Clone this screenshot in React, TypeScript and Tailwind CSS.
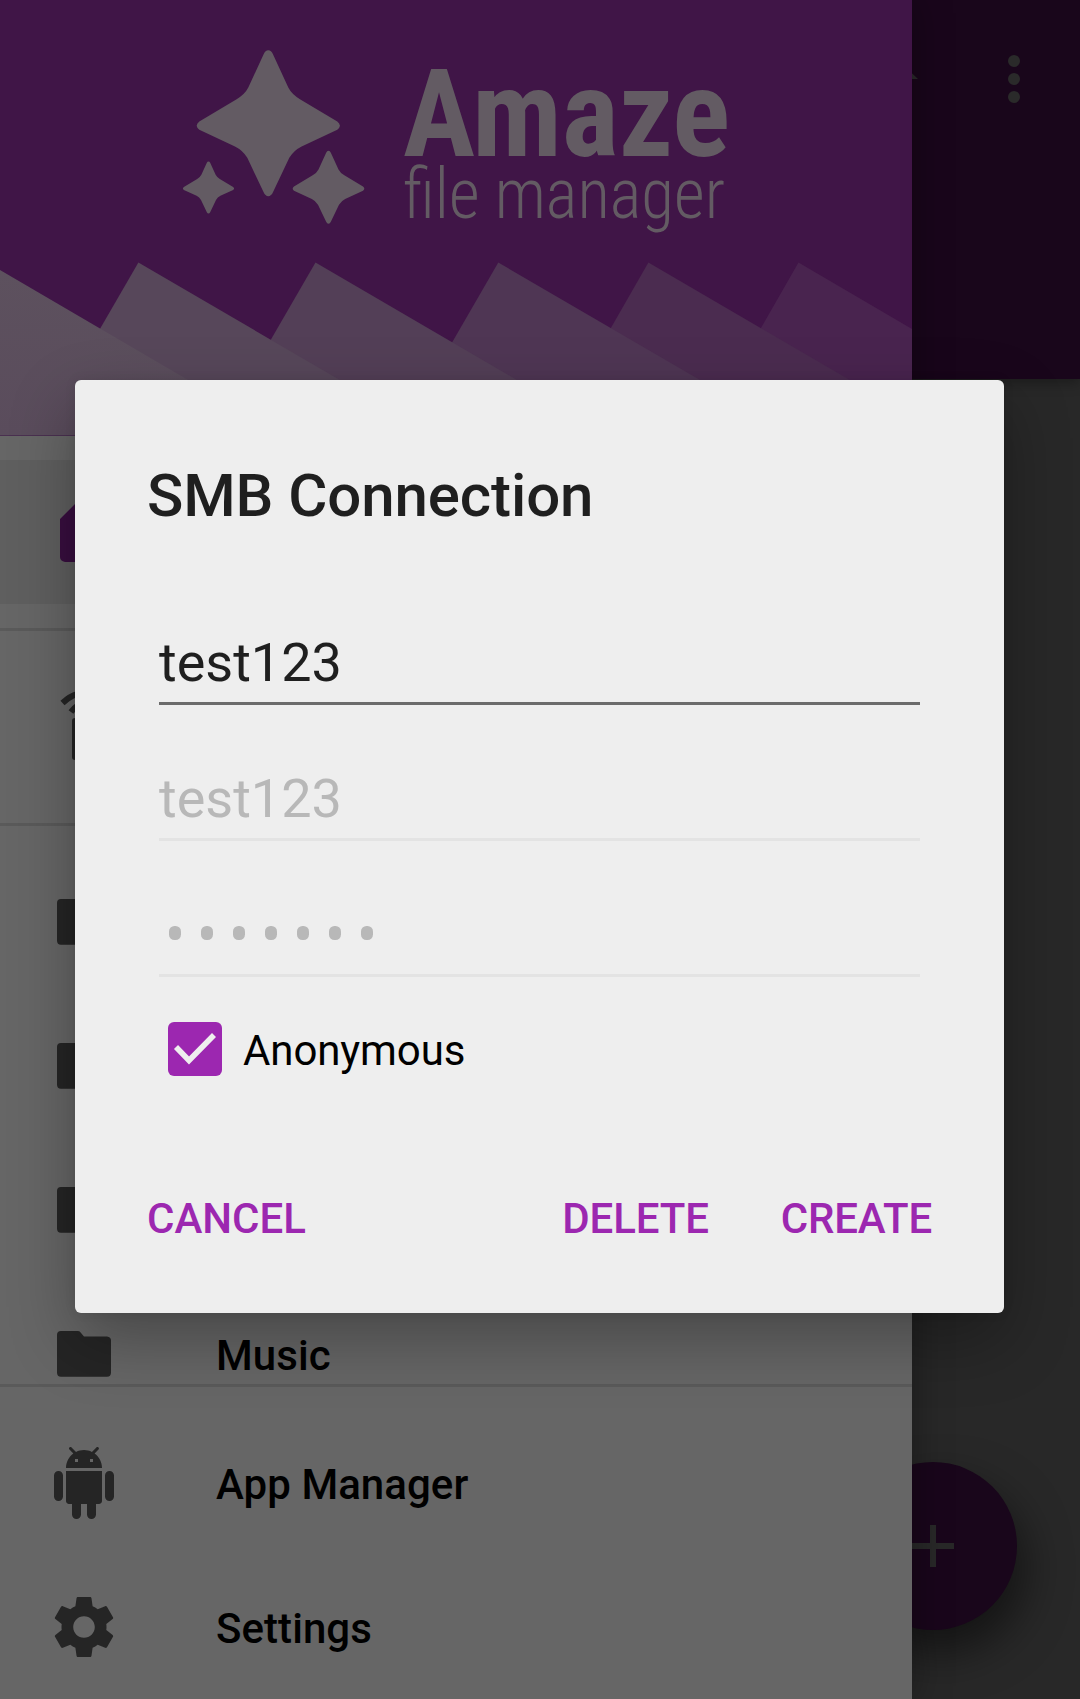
import type { ReactNode } from "react";

const STAR =
  "M0 -219 Q9 -219 14 -207 L60 -107 Q70 -87 95 -72 L207 -5 Q214 0 215 8 Q214 15 207 20 L100 70 Q76 82 63 104 L14 207 Q9 218 0 219 Q-9 218 -14 207 L-63 104 Q-76 82 -100 70 L-207 20 Q-214 15 -215 8 Q-214 0 -207 -5 L-95 -72 Q-70 -87 -60 -107 L-14 -207 Q-9 -219 0 -219 Z";

const ANDROID =
  "M6 18c0 .55.45 1 1 1h1v3.5c0 .83.67 1.5 1.5 1.5s1.5-.67 1.5-1.5V19h2v3.5c0 .83.67 1.5 1.5 1.5s1.5-.67 1.5-1.5V19h1c.55 0 1-.45 1-1V8H6v10zM3.5 8C2.67 8 2 8.67 2 9.5v7c0 .83.67 1.5 1.5 1.5S5 17.33 5 16.5v-7C5 8.67 4.33 8 3.5 8zm17 0c-.83 0-1.5.67-1.5 1.5v7c0 .83.67 1.5 1.5 1.5s1.5-.67 1.5-1.5v-7c0-.83-.67-1.5-1.5-1.5zm-4.97-5.84l1.3-1.3c.2-.2.2-.51 0-.71-.2-.2-.51-.2-.71 0l-1.48 1.48C13.85 1.23 12.95 1 12 1c-.96 0-1.86.23-2.66.63L7.85.15c-.2-.2-.51-.2-.71 0-.2.2-.2.51 0 .71l1.31 1.31C6.97 3.26 6 5.01 6 7h12c0-1.99-.97-3.75-2.47-4.84zM10 5H9V4h1v1zm5 0h-1V4h1v1z";

const GEAR =
  "M19.43 12.98c.04-.32.07-.64.07-.98s-.03-.66-.07-.98l2.11-1.65c.19-.15.24-.42.12-.64l-2-3.46c-.12-.22-.39-.3-.61-.22l-2.49 1c-.52-.4-1.08-.73-1.69-.98l-.38-2.65C14.46 2.18 14.25 2 14 2h-4c-.25 0-.46.18-.49.42l-.38 2.65c-.61.25-1.17.59-1.69.98l-2.49-1c-.23-.09-.49 0-.61.22l-2 3.46c-.13.22-.07.49.12.64l2.11 1.65c-.04.32-.07.65-.07.98s.03.66.07.98l-2.11 1.65c-.19.15-.24.42-.12.64l2 3.46c.12.22.39.3.61.22l2.49-1c.52.4 1.08.73 1.69.98l.38 2.65c.03.24.24.42.49.42h4c.25 0 .46-.18.49-.42l.38-2.65c.61-.25 1.17-.59 1.69-.98l2.49 1c.23.09.49 0 .61-.22l2-3.46c.12-.22.07-.49-.12-.64l-2.11-1.65zM12 15.6c-1.98 0-3.6-1.62-3.6-3.6s1.62-3.6 3.6-3.6 3.6 1.62 3.6 3.6-1.62 3.6-3.6 3.6z";

function Header() {
  return (
    <svg viewBox="0 0 912 436" className="block h-[436px] w-[912px] shrink-0 bg-[#401547]">
      <defs>
        <linearGradient id="slope1" x1="0" y1="0" x2="0" y2="1">
          <stop offset="0" stopColor="#5d515e" />
          <stop offset="1" stopColor="#5a4c5c" />
        </linearGradient>
      </defs>
      <path d="M798.5 262.5 L912 329 V436 H699 Z" fill="#49244f" />
      <path d="M648.4 262.5 L946 436 H549 Z" fill="#4b2c50" />
      <path d="M498.3 262.5 L796 436 H398 Z" fill="#4f3654" />
      <path d="M315.5 262.5 L613 436 H215 Z" fill="#533f57" />
      <path d="M138.4 262.5 L436 436 H38 Z" fill="#57475a" />
      <path d="M0 270 L284 436 H0 Z" fill="url(#slope1)" />
      <rect x="0" y="435" width="912" height="1" fill="#4a3050" />
      <g fill="#635b63">
        <path d={STAR} transform="translate(268.3 123.2) scale(.3333)" />
        <path d={STAR} transform="translate(328.5 187.3) scale(.1667)" />
        <path d={STAR} transform="translate(208.5 187.5) scale(.119)" />
        <text
          x="403"
          y="155.7"
          fontSize="122"
          fontWeight="700"
          className="[font-stretch:75%]"
          textLength="327"
          lengthAdjust="spacingAndGlyphs"
        >
          Amaze
        </text>
        <text
          x="403"
          y="218"
          fontSize="70"
          fontWeight="300"
          className="[font-stretch:75%]"
          textLength="322"
          lengthAdjust="spacingAndGlyphs"
        >
          file manager
        </text>
      </g>
    </svg>
  );
}

function FolderIcon() {
  return (
    <svg viewBox="0 0 72 72" className="size-[72px]" fill="#252525">
      <path d="M13 13 H30 Q32 13 33 15 L36 18.5 H59 Q63 19 63 22.5 V54.500 Q63 58.700 59 58.700 H13 Q9 58.700 9 54.500 V17 Q9 13 13 13 Z" />
    </svg>
  );
}

function HomeIcon() {
  return (
    <svg viewBox="0 0 72 72" className="size-[72px]" fill="#380e3f">
      <path d="M12 23 L36 -1 L60 23 V61 Q60 66 55 66 H43 V42 H29 V66 H17 Q12 65 12 61 Z" />
    </svg>
  );
}

function ShareIcon() {
  return (
    <svg viewBox="0 0 72 72" className="size-[72px]" fill="none" stroke="#252525" strokeWidth="6">
      <path d="M14.500 12 C22 5 29 2 36 2 S50 5 57.500 12" />
      <path d="M23 21 Q29 13 36 13 T49 21" />
      <rect x="24" y="27" width="24" height="42" rx="3" fill="#252525" stroke="none" />
    </svg>
  );
}

function Glyph({ d }: { d: string }) {
  return (
    <svg viewBox="0 0 24 24" className="size-[72px]" fill="#252525">
      <path d={d} />
    </svg>
  );
}

function Row({ icon, label, selected }: { icon: ReactNode; label?: string; selected?: boolean }) {
  return (
    <div
      className={
        selected
          ? "flex h-36 shrink-0 items-center gap-24 bg-[#5f5f5f] pl-12"
          : "flex h-36 shrink-0 items-center gap-24 pl-12"
      }
    >
      {icon}
      <span className="pt-[3px] text-[42px] leading-[50px] font-medium tracking-[0.06px] text-black">{label}</span>
    </div>
  );
}

function Divider() {
  return <div className="h-[3px] shrink-0 bg-[#5a5a5a]" />;
}

function Drawer() {
  return (
    <aside className="absolute inset-y-0 left-0 flex w-[912px] flex-col overflow-hidden bg-[#666666] shadow-[0_0_36px_rgba(0,0,0,0.35)]">
      <div className="flex h-[1384px] shrink-0 flex-col overflow-hidden">
        <Header />
        <div className="flex shrink-0 flex-col py-6">
          <Row icon={<HomeIcon />} selected />
        </div>
        <Divider />
        <div className="flex shrink-0 flex-col py-6">
          <Row icon={<ShareIcon />} />
        </div>
        <Divider />
        <div className="flex shrink-0 flex-col pt-6">
          <Row icon={<FolderIcon />} />
          <Row icon={<FolderIcon />} />
          <Row icon={<FolderIcon />} />
          <Row icon={<FolderIcon />} label="Music" />
        </div>
      </div>
      <Divider />
      <div className="flex shrink-0 flex-col pt-6">
        <Row icon={<Glyph d={ANDROID} />} label="App Manager" />
        <Row icon={<Glyph d={GEAR} />} label="Settings" />
      </div>
    </aside>
  );
}

function Backdrop() {
  return (
    <>
      <div className="flex h-[379px] justify-end bg-[#19061b] shadow-[0_4px_12px_rgba(0,0,0,0.3)]">
        <svg viewBox="0 0 180 160" className="h-40 w-[180px]" fill="#2a2a2a">
          <path d="M0 62 L18 79 H0 Z" />
          <circle cx="114" cy="61" r="6" />
          <circle cx="114" cy="79" r="6" />
          <circle cx="114" cy="97" r="6" />
        </svg>
      </div>
      <div className="absolute top-[1462px] left-[849px] flex size-[168px] items-center justify-center rounded-full bg-[#19061b] shadow-[8px_22px_44px_rgba(0,0,0,0.5)]">
        <svg viewBox="0 0 42 42" className="size-[42px]" fill="#282828">
          <path d="M18 0 H24 V18 H42 V24 H24 V42 H18 V24 H0 V18 H18 Z" />
        </svg>
      </div>
    </>
  );
}

function Dialog() {
  return (
    <section className="absolute top-[380px] left-[75px] flex h-[933px] w-[929px] flex-col rounded-[6px] bg-[#eeeeee] px-[72px] pt-20 shadow-[0_26px_66px_rgba(0,0,0,0.3),0_0_12px_rgba(0,0,0,0.08)]">
      <h1 className="text-[60px] leading-[72px] font-medium tracking-[-0.1px] text-[#1f1f1f]">SMB Connection</h1>
      <div className="mt-[95px] flex flex-col gap-[58px] px-3">
        <div className="h-[78px] border-b-[3px] border-[#6b6b6b] text-[54px] leading-[72px] text-[#1f1f1f]">
          test123
        </div>
        <div className="h-[78px] border-b-[3px] border-[#e3e3e3] text-[54px] leading-[72px] text-[#b8b8b8]">
          test123
        </div>
        <div className="flex h-[78px] gap-5 border-b-[3px] border-[#e3e3e3] pt-[27px] pl-2.5">
          {[0, 1, 2, 3, 4, 5, 6].map((dot) => (
            <span key={dot} className="h-3.5 w-3 rounded-[5.5px] bg-[#b8b8b8]" />
          ))}
        </div>
      </div>
      <label className="mt-[45px] flex h-[54px] items-center gap-[21px] pl-[21px]">
        <svg viewBox="0 0 54 54" className="size-[54px]">
          <rect width="54" height="54" rx="6" fill="#9c27b0" />
          <path d="M8 25 L21 38.500 L46 13" fill="none" stroke="#eeeeee" strokeWidth="5.600" />
        </svg>
        <span className="pt-[3px] text-[42px] leading-[50px] tracking-[-0.1px] text-black">Anonymous</span>
      </label>
      <div className="mt-[118px] flex text-[42px] leading-[50px] font-medium text-[#9c27b0]">
        <button className="mr-auto">CANCEL</button>
        <button className="mr-[72px] tracking-[-0.15px]">DELETE</button>
        <button className="tracking-[-0.15px]">CREATE</button>
      </div>
    </section>
  );
}

export default function App() {
  return (
    <main className="relative h-[1699px] w-[1080px] overflow-hidden bg-[#282828] font-['Roboto',sans-serif]">
      <Backdrop />
      <Drawer />
      <Dialog />
    </main>
  );
}
